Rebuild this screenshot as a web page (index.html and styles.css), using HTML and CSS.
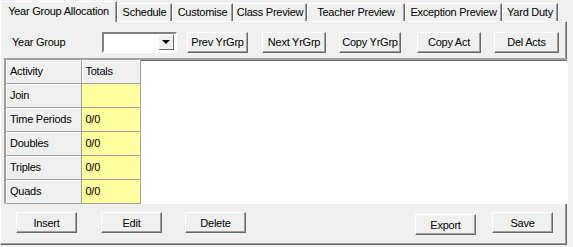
FILE: index.html
```html
<!DOCTYPE html>
<html lang="en">
<head>
    <meta charset="UTF-8">
    <title>Year Group Allocation</title>
    <link rel="stylesheet" href="styles.css">
</head>
<body>
    <!-- Tabs -->
    <div class="tabs">
        <div class="tab active t-alloc">Year Group Allocation</div>
        <div class="tab t-sched">Schedule</div>
        <div class="tab t-cust">Customise</div>
        <div class="tab t-class">Class Preview</div>
        <div class="tab t-teach">Teacher Preview</div>
        <div class="tab t-exc">Exception Preview</div>
        <div class="tab t-yard">Yard Duty</div>
    </div>

    <div class="panel">
        <!-- Top controls -->
        <div class="top-row">
            <span class="label">Year Group</span>
            <div class="combo">
                <div class="combo-text"></div>
                <div class="combo-btn"><span class="arrow"></span></div>
            </div>
            <button class="btn btn-prev">Prev YrGrp</button>
            <button class="btn btn-next">Next YrGrp</button>
            <button class="btn btn-copy">Copy YrGrp</button>
            <button class="btn btn-act">Copy Act</button>
            <button class="btn btn-del">Del Acts</button>
        </div>

        <!-- Grid -->
        <div class="grid-box">
            <table class="grid">
                <tr class="first"><td class="head">Activity</td><td class="head">Totals</td></tr>
                <tr><td class="head">Join</td><td class="val"></td></tr>
                <tr><td class="head">Time Periods</td><td class="val">0/0</td></tr>
                <tr><td class="head">Doubles</td><td class="val">0/0</td></tr>
                <tr><td class="head">Triples</td><td class="val">0/0</td></tr>
                <tr><td class="head">Quads</td><td class="val">0/0</td></tr>
            </table>
        </div>

        <!-- Bottom buttons -->
        <div class="bottom-row">
            <button class="btn b-insert">Insert</button>
            <button class="btn b-edit">Edit</button>
            <button class="btn b-delete">Delete</button>
            <span class="spacer"></span>
            <button class="btn b-export">Export</button>
            <button class="btn b-save">Save</button>
        </div>
    </div>
</body>
</html>
```

FILE: styles.css
```css
body {
    margin: 0;
    background-color: #f0f0f0;
    font-family: "Liberation Sans", Arial, sans-serif;
    font-size: 11px;
    letter-spacing: -0.25px;
    color: #000;
    width: 573px;
    height: 247px;
    overflow: hidden;
}

.tabs {
    display: flex;
    align-items: flex-end;
    height: 21px;
    padding-left: 2px;
    position: relative;
    z-index: 1;
}

.tab {
    height: 17px;
    line-height: 16px;
    text-align: center;
    border-top: 1px solid #fff;
    border-left: 1px solid #fff;
    border-right: 1px solid #696969;
    box-shadow: inset -1px 0 0 #a0a0a0;
    white-space: nowrap;
    box-sizing: content-box;
}

.tab.active {
    height: 20px;
    line-height: 18px;
    margin-left: -2px;
    margin-bottom: -1px;
    background-color: #f0f0f0;
}

.t-alloc { width: 115px; }
.t-sched { width: 53px; }
.t-cust { width: 59px; }
.t-class { width: 72px; }
.t-teach { width: 96px; }
.t-exc { width: 95px; }
.t-yard { width: 54px; }

.panel {
    width: 565px;
    height: 222px;
    border-top: 1px solid #fff;
    border-left: 1px solid #fff;
    border-right: 1px solid #696969;
    border-bottom: 1px solid #696969;
    box-shadow: inset -1px -1px 0 #a0a0a0;
}

.top-row {
    display: flex;
    align-items: center;
    height: 22px;
    margin-top: 9px;
}

.label {
    width: 90px;
    padding-left: 11px;
}

.combo {
    display: flex;
    width: 71px;
    height: 17px;
    border-top: 2px solid #808080;
    border-left: 2px solid #808080;
    border-right: 2px solid #fff;
    border-bottom: 2px solid #fff;
    background-color: #fff;
}

.combo-text {
    flex: 1;
}

.combo-btn {
    width: 15px;
    height: 15px;
    margin: 1px;
    background-color: #f0f0f0;
    border-right: 1px solid #696969;
    border-bottom: 1px solid #696969;
    box-sizing: border-box;
    display: flex;
    align-items: center;
    justify-content: center;
}

.arrow {
    width: 0;
    height: 0;
    border-left: 4px solid transparent;
    border-right: 4px solid transparent;
    border-top: 4px solid #000;
}

.btn {
    font-family: "Liberation Sans", Arial, sans-serif;
    font-size: 11px;
    letter-spacing: -0.25px;
    background-color: #f0f0f0;
    color: #000;
    height: 21px;
    padding: 0;
    border-top: 1px solid #fff;
    border-left: 1px solid #fff;
    border-right: 1px solid #696969;
    border-bottom: 1px solid #696969;
    box-shadow: inset -1px -1px 0 #a0a0a0;
    border-radius: 0;
}

.btn-prev { width: 61px; margin-left: 10px; }
.btn-next { width: 64px; margin-left: 14px; }
.btn-copy { width: 62px; margin-left: 13px; }
.btn-act { width: 64px; margin-left: 16px; }
.btn-del { width: 65px; margin-left: 13px; }

.grid-box {
    margin: 5px 0 0 3px;
    width: 561px;
    height: 143px;
    background-color: #fff;
    border-top: 2px solid #a0a0a0;
    border-left: 2px solid #a0a0a0;
    border-right: 1px solid #fff;
    border-bottom: 1px solid #fff;
    box-shadow: inset 1px 1px 0 #696969;
}

.grid {
    border-collapse: collapse;
}

.grid td {
    height: 24px;
    padding: 0 0 0 4px;
    border-right: 1px solid #a0a0a0;
    border-bottom: 1px solid #a0a0a0;
    box-sizing: border-box;
}

.grid .first td {
    height: 23px;
}

.grid td:first-child {
    width: 75px;
}

.grid td:last-child {
    width: 59px;
}

.grid .head {
    background-color: #f0f0f0;
    box-shadow: inset 1px 1px 0 #fff;
}

.grid .val {
    background-color: #ffffa0;
}

.bottom-row {
    display: flex;
    align-items: flex-start;
    margin-top: 8px;
}

.bottom-row .btn {
    width: 61px;
}

.b-insert { margin-left: 15px; }
.b-edit { margin-left: 24px; }
.b-delete { margin-left: 23px; }
.spacer { flex: 1; }
.b-export { margin-top: 2px; }
.b-save { margin-left: 16px; margin-right: 13px; }
```
